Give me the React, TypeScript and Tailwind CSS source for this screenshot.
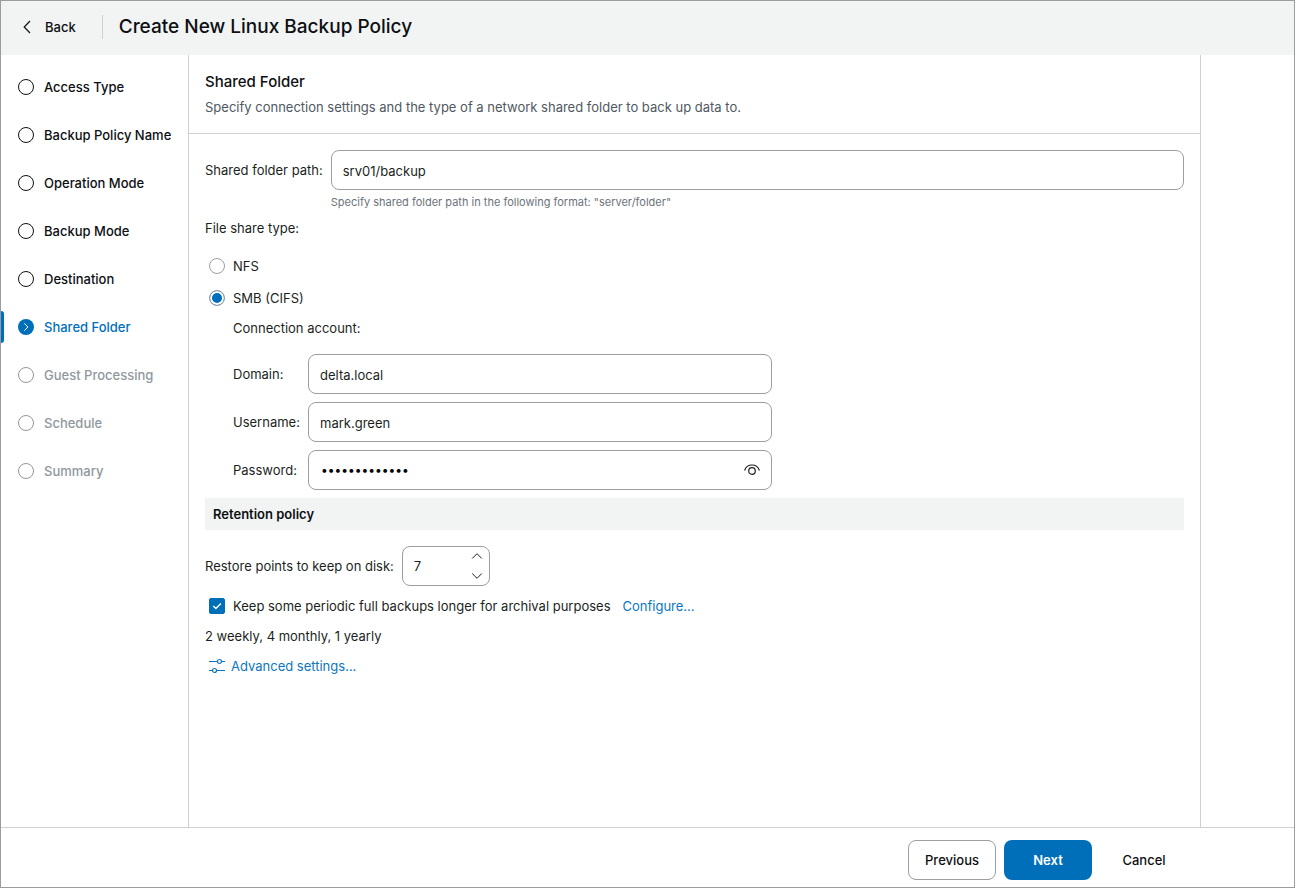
import { useState } from "react";
import type { ReactNode } from "react";

type StepState = "done" | "current" | "upcoming";

const steps: { label: string; state: StepState }[] = [
  { label: "Access Type", state: "done" },
  { label: "Backup Policy Name", state: "done" },
  { label: "Operation Mode", state: "done" },
  { label: "Backup Mode", state: "done" },
  { label: "Destination", state: "done" },
  { label: "Shared Folder", state: "current" },
  { label: "Guest Processing", state: "upcoming" },
  { label: "Schedule", state: "upcoming" },
  { label: "Summary", state: "upcoming" },
];

const stepText: Record<StepState, string> = {
  done: "text-[#0d0f12]",
  current: "text-[#006fba]",
  upcoming: "text-[#8f989c]",
};

function StepIcon({ state }: { state: StepState }) {
  return (
    <svg viewBox="0 0 16 16" className="size-4 shrink-0" fill="none" stroke="currentColor" aria-hidden="true">
      {state === "current" ? (
        <>
          <circle cx="8" cy="8" r="8" fill="currentColor" stroke="none" />
          <path d="M6.300 4.300 9.900 8l-3.600 3.700" stroke="white" />
        </>
      ) : (
        <circle cx="8" cy="8" r="7.5" />
      )}
    </svg>
  );
}

function Sidebar() {
  return (
    <nav aria-label="Wizard steps" className="w-[188px] shrink-0 border-r border-[#cdd1d2] pt-2">
      <ol>
        {steps.map((step) => (
          <li key={step.label} className="relative">
            {step.state === "current" && (
              <span className="absolute top-2 left-0 h-8 w-[3px] rounded-r-sm bg-[#006fba]" />
            )}
            <a
              href="#"
              aria-current={step.state === "current" ? "step" : undefined}
              className={`flex h-12 items-center gap-2.5 pl-[17px] font-medium whitespace-nowrap ${stepText[step.state]}`}
            >
              <StepIcon state={step.state} />
              {step.label}
            </a>
          </li>
        ))}
      </ol>
    </nav>
  );
}

const box = "h-10 rounded-lg border border-[#9b9fa1] bg-white";

function AccountRow({ id, label, children }: { id: string; label: string; children: ReactNode }) {
  return (
    <div className="flex items-center">
      <label htmlFor={id} className="w-[75px] shrink-0">
        {label}
      </label>
      {children}
    </div>
  );
}

function ShareOption({ label, checked, onSelect }: { label: string; checked: boolean; onSelect: () => void }) {
  return (
    <label className="flex h-8 items-center gap-2 pl-1">
      <input
        type="radio"
        name="share-type"
        checked={checked}
        onChange={onSelect}
        className="size-4 appearance-none rounded-full border border-[#9b9fa1] bg-white checked:bg-[#006fba] checked:shadow-[inset_0_0_0_2px_white]"
      />
      {label}
    </label>
  );
}

export default function App() {
  const [share, setShare] = useState("smb");
  const [points, setPoints] = useState(7);
  const [visible, setVisible] = useState(false);

  return (
    <div className="flex min-h-screen flex-col border border-[#9c9c9c] bg-white font-[Inter,sans-serif] text-[13px] leading-5 text-[#1c1f22]">
      <header className="flex h-[54px] shrink-0 items-center bg-[#f2f4f4] pb-0.5 text-[#0d0f12]">
        <button type="button" className="flex items-center gap-3 pl-5 font-medium">
          <svg viewBox="0 0 12 14" className="h-3.5 w-3" fill="none" stroke="currentColor" strokeWidth="1.200" aria-hidden="true">
            <path d="M9 1 3.200 7 9 13" />
          </svg>
          Back
        </button>
        <span className="ml-[26px] h-6 w-px bg-[#cdd1d2]" />
        <h1 className="ml-4 text-[19px] leading-6 font-medium">Create New Linux Backup Policy</h1>
      </header>

      <div className="flex w-full max-w-[1200px] grow border-r border-[#cdd1d2]">
        <Sidebar />
        <main className="min-w-0 grow">
          <div className="border-b border-[#cdd1d2] px-4 pt-[15px] pb-3.5">
            <h2 className="text-[15px] leading-6 font-medium text-[#0d0f12]">Shared Folder</h2>
            <p className="pt-px leading-6 text-[#505861]">
              Specify connection settings and the type of a network shared folder to back up data to.
            </p>
          </div>

          <form className="px-4 pt-4" onSubmit={(e) => e.preventDefault()}>
            <div className="flex gap-2">
              <label htmlFor="path" className="shrink-0 leading-10">
                Shared folder path:
              </label>
              <div className="min-w-0 grow">
                <input id="path" defaultValue="srv01/backup" className={`${box} w-full px-[11px] pt-0.5`} />
                <p className="pt-1 text-[11px] leading-4 text-[#6b737b]">
                  Specify shared folder path in the following format: "server/folder"
                </p>
              </div>
            </div>

            <fieldset className="pt-2">
              <legend className="float-left w-full pb-3">File share type:</legend>
              <div className="clear-both">
                <ShareOption label="NFS" checked={share === "nfs"} onSelect={() => setShare("nfs")} />
                <ShareOption label="SMB (CIFS)" checked={share === "smb"} onSelect={() => setShare("smb")} />
              </div>
            </fieldset>

            <div className="w-[567px] max-w-full pt-1 pl-7">
              <p className="pb-4">Connection account:</p>
              <div className="flex flex-col gap-2">
                <AccountRow id="domain" label="Domain:">
                  <input id="domain" defaultValue="delta.local" className={`${box} min-w-0 grow px-[11px] pt-0.5`} />
                </AccountRow>
                <AccountRow id="username" label="Username:">
                  <input id="username" defaultValue="mark.green" className={`${box} min-w-0 grow px-[11px] pt-0.5`} />
                </AccountRow>
                <AccountRow id="password" label="Password:">
                  <div className={`${box} flex min-w-0 grow items-center pr-[11px] pl-3`}>
                    <input
                      id="password"
                      type={visible ? "text" : "password"}
                      defaultValue="backup-secret"
                      className="min-w-0 grow text-[12px] text-black outline-none"
                    />
                    <button type="button" aria-label="Show password" onClick={() => setVisible(!visible)}>
                      <svg viewBox="0 0 16 16" className="size-4" fill="none" stroke="#1c1f22" strokeWidth="1.200" aria-hidden="true">
                        <path d="M.6 8.500C1.800 4.900 4.600 3 8 3s6.200 1.900 7.400 5.500" />
                        <circle cx="8" cy="9" r="3.300" />
                      </svg>
                    </button>
                  </div>
                </AccountRow>
              </div>
            </div>

            <h3 className="mt-2 bg-[#f2f4f4] px-2 py-1.5 font-semibold text-[#0d0f12]">Retention policy</h3>

            <div className="flex items-center gap-2 pt-4">
              <label htmlFor="points">Restore points to keep on disk:</label>
              <div className={`${box} flex w-[88px] items-center pr-1.5 pl-[11px]`}>
                <input
                  id="points"
                  inputMode="numeric"
                  value={points}
                  onChange={(e) => setPoints(Number(e.target.value) || 0)}
                  className="min-w-0 grow outline-none"
                />
                <div className="flex flex-col">
                  <button type="button" aria-label="Increase" onClick={() => setPoints(points + 1)}>
                    <svg viewBox="0 0 12 20" className="h-5 w-3" fill="none" stroke="#1c1f22" aria-hidden="true">
                      <path d="M1.200 12.500 6 7.700l4.800 4.800" />
                    </svg>
                  </button>
                  <button type="button" aria-label="Decrease" onClick={() => setPoints(Math.max(1, points - 1))}>
                    <svg viewBox="0 0 12 20" className="h-5 w-3" fill="none" stroke="#1c1f22" aria-hidden="true">
                      <path d="M1.200 7.500 6 12.300l4.800-4.800" />
                    </svg>
                  </button>
                </div>
              </div>
            </div>

            <div className="flex items-center gap-3 pt-2.5">
              <label className="flex items-center gap-2 pl-1">
                <span className="relative size-4">
                  <input
                    type="checkbox"
                    defaultChecked
                    className="peer block size-4 appearance-none rounded-xs border border-[#9b9fa1] checked:border-[#006fba] checked:bg-[#006fba]"
                  />
                  <svg
                    viewBox="0 0 16 16"
                    className="pointer-events-none absolute inset-0 hidden size-4 peer-checked:block"
                    fill="none"
                    stroke="white"
                    strokeWidth="1.400"
                    aria-hidden="true"
                  >
                    <path d="m4.300 7.900 2.600 2.600 5-5" />
                  </svg>
                </span>
                Keep some periodic full backups longer for archival purposes
              </label>
              <a href="#" className="text-[#0b76bf]">
                Configure...
              </a>
            </div>
            <p className="pt-2.5">2 weekly, 4 monthly, 1 yearly</p>
            <a href="#" className="mt-2.5 ml-1 inline-flex items-center gap-1.5 text-[#0b76bf]">
              <svg viewBox="0 0 16 16" className="size-4" fill="none" stroke="currentColor" strokeWidth="1.200" aria-hidden="true">
                <path d="M0 3.500h8.500M12.500 3.500H16M0 12.500h3.500M7.500 12.500H16" />
                <circle cx="10.500" cy="3.500" r="2" />
                <circle cx="5.500" cy="12.500" r="2" />
              </svg>
              Advanced settings...
            </a>
          </form>
        </main>
      </div>

      <footer className="shrink-0 border-t border-[#cdd1d2]">
        <div className="flex max-w-[1187px] justify-end gap-2 pt-3 pb-[7px] font-medium text-[#0d0f12]">
          <button type="button" className="h-10 w-[88px] rounded-lg border border-[#9b9fa1]">
            Previous
          </button>
          <button type="button" className="h-10 w-[88px] rounded-lg bg-[#006fba] font-semibold text-white">
            Next
          </button>
          <button type="button" className="h-10 w-[88px] rounded-lg">
            Cancel
          </button>
        </div>
      </footer>
    </div>
  );
}
